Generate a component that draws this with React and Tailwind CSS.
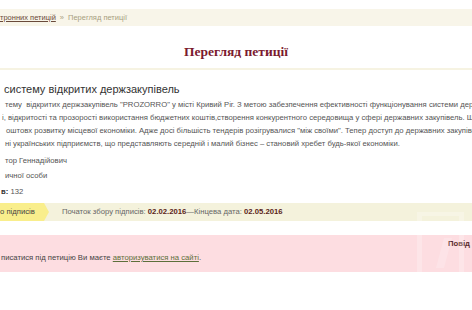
import React from 'react';

const sans = { fontFamily: '"Liberation Sans", Arial, sans-serif' };

export default function App() {
  return (
    <div className="relative w-[472px] h-[310px] overflow-hidden bg-white" style={sans}>
      <div className="h-[9px]" />
      <div className="h-[17px] bg-[#f8f5e9] flex items-center whitespace-nowrap text-[7.5px] text-[#a89f80]">
        <a className="text-[#6a4a3a] underline">тронних петицій</a>
        <span className="mx-[4px]">»</span>
        <span>Перегляд петиції</span>
      </div>
      <div className="h-[42px] pt-[18px] flex justify-center">
        <h1
          className="text-[13.5px] leading-[16px] font-bold text-[#7b1a2e]"
          style={{ fontFamily: '"Liberation Serif", "Times New Roman", serif' }}
        >
          Перегляд петиції
        </h1>
      </div>
      <div className="h-[2px] bg-[#f6f3e2]" />

      <div className="pt-[12px] whitespace-nowrap">
        <h2 className="pl-[4px] text-[11px] leading-[14px] text-[#333]">систему відкритих держзакупівель</h2>
        <div className="mt-[1.5px] text-[7.7px] leading-[13px] text-[#555]">
          <p className="pl-[5px]">тему&nbsp;&nbsp;відкритих держзакупівель "PROZORRO" у місті Кривий Ріг. З метою забезпечення ефективності функціонування системи держ</p>
          <p className="pl-[2px]">і, відкритості та прозорості використання бюджетних коштів,створення конкурентного середовища у сфері державних закупівель. Щ</p>
          <p className="pl-[6px]">оштовх розвитку місцевої економіки. Адже досі більшість тендерів розігрувалися "між своїми". Тепер доступ до державних закупівел</p>
          <p className="pl-[5px]">ні українських підприємств, що представляють середній і малий бізнес – становий хребет будь-якої економіки.</p>
        </div>
        <div className="mt-[3px] text-[7.7px] leading-[15.5px] text-[#555]">
          <p className="pl-[5px]">тор Геннадійович</p>
          <p className="pl-[5px]">ичної особи</p>
          <p className="pl-[1px]"><b className="text-[#333]">в:</b> 132</p>
        </div>
      </div>

      <div className="mt-[4px] h-[18px] bg-[#f4f2dc] flex items-center whitespace-nowrap text-[7.7px]">
        <div className="h-full flex items-center">
          <div className="h-full bg-[#f9ee8c] flex items-center pr-[9px] text-[#444]">о підписів</div>
          <div className="h-0 w-0 border-y-[9px] border-y-transparent border-l-[5px] border-l-[#f9ee8c]" />
        </div>
        <div className="ml-[13px] text-[#666]">
          Початок збору підписів: <b className="text-[#5a2418]">02.02.2016</b>—Кінцева дата: <b className="text-[#5a2418]">02.05.2016</b>
        </div>
      </div>

      <div className="mt-[14px] h-[37px] bg-[#fddde1] relative whitespace-nowrap text-[7.7px] leading-[10px] text-[#444]">
        <span className="absolute right-[2px] top-[4px] font-bold text-[#5a2a2a]">Повід</span>
        <div className="pt-[18px] pl-[1px]">
          писатися під петицію Ви маєте <a className="text-[#5d6f3a] underline">авторизуватися на сайті</a>.
        </div>
      </div>

      <div className="absolute left-[417px] top-[212px] w-[47px] h-[80px] border-x-[5px] border-t-[4px] border-white/25" />
      <div className="absolute left-[440px] top-[238px] w-[8px] h-[30px] bg-white/20 skew-x-[-15deg]" />
    </div>
  );
}
